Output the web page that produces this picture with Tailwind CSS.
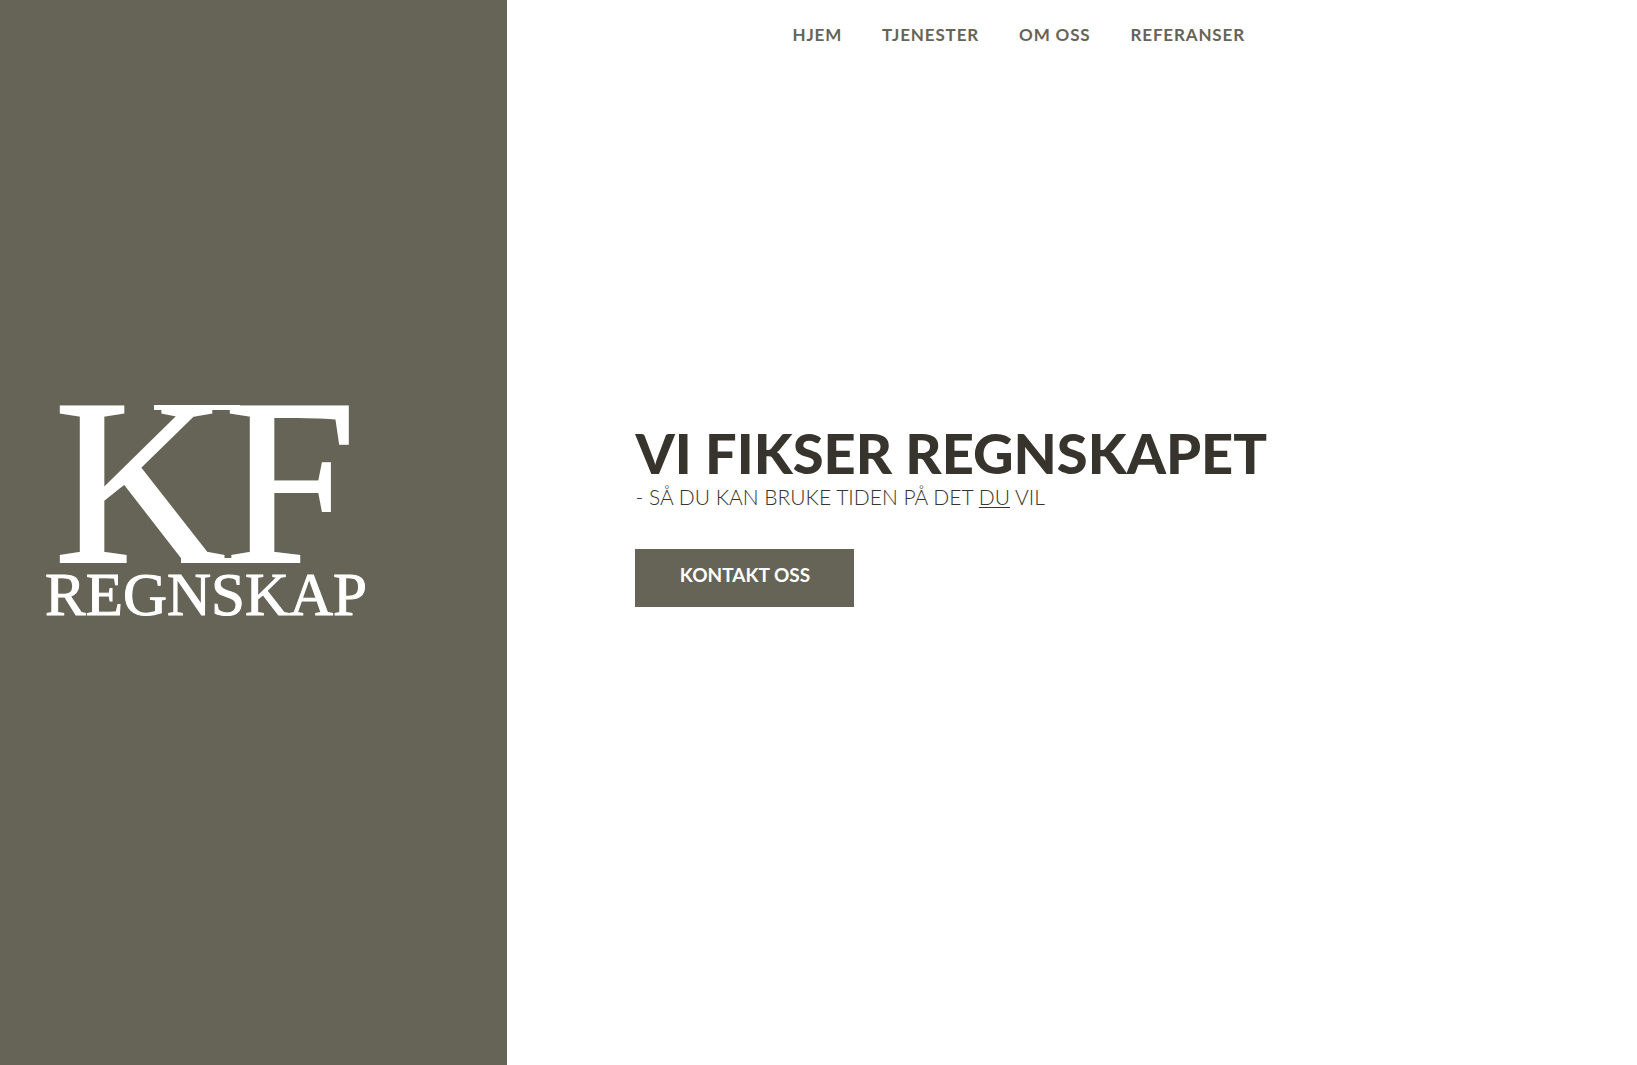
<!DOCTYPE html>
<html lang="no">
  <head>
    <meta charset="UTF-8">
    <meta name="viewport" content="width=device-width, initial-scale=1.0">
    <title>KF Regnskap</title>
    <script src="https://cdn.jsdelivr.net/npm/@tailwindcss/browser@4"></script>
  </head>

  <body class="bg-white font-['Lato',sans-serif] text-[#36342c]">
    <div class="flex min-h-screen">
        <aside class="flex w-[31%] shrink-0 items-center bg-[#666456] pb-10 pl-10">
            <!-- Logo -->
            <svg viewBox="0 0 336 220" class="w-[336px] max-w-full overflow-visible fill-white stroke-white font-['Liberation_Serif',serif]" role="img" aria-label="KF Regnskap">
                <text x="14" y="159" font-size="238" stroke-width="2">K</text>
                <text x="184" y="159" font-size="238" stroke-width="2">F</text>
                <!-- Serifs that join the two letters -->
                <rect x="114" y="2" width="86" height="5" stroke="none" />
                <rect x="141" y="155" width="60" height="5" stroke="none" />
                <text x="5" y="212" font-size="61" stroke-width="1">REGNSKAP</text>
            </svg>
        </aside>

        <main class="flex min-w-0 flex-1 flex-col">
            <nav class="flex h-[70px] items-center gap-10 pl-[285px] text-[17px] font-bold tracking-wider text-[#666456]">
                <a href="#hjem">HJEM</a>
                <a href="#tjenester">TJENESTER</a>
                <a href="#om-oss">OM OSS</a>
                <a href="#referanser">REFERANSER</a>
            </nav>

            <section class="flex flex-1 flex-col items-start justify-center px-32 pb-26">
                <h1 class="text-[56px] leading-[56px] font-black">VI FIKSER REGNSKAPET</h1>
                <p class="text-[21px] leading-8 font-light">- SÅ DU KAN BRUKE TIDEN PÅ DET <u class="decoration-1 underline-offset-2">DU</u> VIL</p>
                <a href="#kontakt" class="mt-9 flex h-[58px] w-[219px] items-center justify-center bg-[#666456] pb-1 text-[19px] font-bold text-white">KONTAKT OSS</a>
            </section>
        </main>
    </div>
  </body>
</html>
